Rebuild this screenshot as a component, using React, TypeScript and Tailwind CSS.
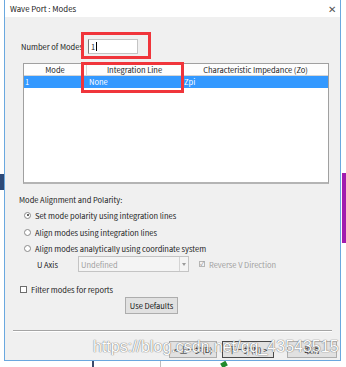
import React from "react";

const F = "font-['Noto_Sans_CJK_SC','Noto_Sans',sans-serif]";

function Radio({ checked }: { checked?: boolean }) {
  return (
    <span className="relative inline-block w-[7px] h-[7px] rounded-full border border-[#8a8a8a] bg-white shrink-0">
      {checked && <span className="absolute left-[1.5px] top-[1.5px] w-[2px] h-[2px] rounded-full bg-[#333]" />}
    </span>
  );
}

function Btn({ children, w, focus }: { children: React.ReactNode; w: string; focus?: boolean }) {
  return (
    <div
      className={`${w} h-[17px] flex items-center justify-center bg-[#e1e1e1] border ${
        focus ? "border-[#4a4a4a]" : "border-[#adadad]"
      } text-[7.5px] text-[#111]`}
    >
      {children}
    </div>
  );
}

export default function App() {
  return (
    <div className={`relative w-[346px] h-[367px] bg-white overflow-hidden ${F}`}>
      {/* background decorations */}
      <div className="absolute left-0 top-[174px] w-[4px] h-[16px] bg-[#2e4a78]" />
      <div className="absolute left-[342px] top-[173px] w-[4px] h-[70px] bg-[#a21caf]" />
      <div className="absolute left-[92px] top-[361px] w-[2px] h-[6px] bg-[#3b4a6b]" />
      <div className="absolute left-[160px] top-[361px] w-[1px] h-[6px] bg-[#bdbdbd]" />
      <div className="absolute left-[221px] top-[362px] w-[6px] h-[5px] bg-[#1f8a2c] rotate-[-30deg]" />

      {/* dialog */}
      <div className="absolute left-[4px] top-0 w-[337px] h-[361px] border-l border-r border-b border-[#6aa8df] bg-[#f0f0f0] flex flex-col">
        <div className="h-[17px] bg-white flex items-center justify-between pl-[5px] pr-[4px]">
          <span className="text-[7.8px] text-[#222]">Wave Port : Modes</span>
          <span className="text-[10px] text-[#555] leading-none">✕</span>
        </div>

        <div className="flex flex-col pl-[16px] pr-[11px] text-[7.5px] text-[#1a1a1a]">
          {/* number of modes */}
          <div className="flex items-center mt-[22px] h-[15px]">
            <span className="w-[67px] overflow-hidden whitespace-nowrap">Number of Modes</span>
            <div className="w-[50px] h-[15px] bg-white border border-[#c4c4c4] border-l-[#7a7a7a] flex items-center pl-[2px]">
              1<span className="w-[1px] h-[9px] bg-black ml-[1px]" />
            </div>
          </div>

          {/* table */}
          <div className="mt-[9px] ml-[2px] w-[306px] h-[121px] bg-white border border-[#a0a0a0] border-b-2 border-b-[#b4b4b4] flex flex-col">
            <div className="h-[12px] flex border-b border-[#d5d5d5] bg-[#fdfdfd] leading-[11px]">
              <div className="w-[63px] text-center border-r border-[#d5d5d5]">Mode</div>
              <div className="w-[96px] text-center border-r border-[#9a9a9a]">Integration Line</div>
              <div className="flex-1 text-center">Characteristic Impedance (Zo)</div>
            </div>
            <div className="h-[12px] flex bg-[#3399ff] text-white leading-[12px]">
              <div className="w-[63px] pl-[1px]">1</div>
              <div className="w-[96px] pl-[2px]">None</div>
              <div className="flex-1 pl-[1px]">Zpi</div>
            </div>
          </div>

          {/* alignment */}
          <div className="mt-[10px] -ml-[2px]">Mode Alignment and Polarity:</div>
          <div className="flex items-center gap-[4px] mt-[5px] ml-[3px] h-[10px]">
            <Radio checked />
            <span>Set mode polarity using integration lines</span>
          </div>
          <div className="flex items-center gap-[4px] mt-[7px] ml-[3px] h-[10px]">
            <Radio />
            <span>Align modes using integration lines</span>
          </div>
          <div className="flex items-center gap-[4px] mt-[6px] ml-[3px] h-[10px]">
            <Radio />
            <span>Align modes analytically using coordinate system</span>
          </div>
          <div className="flex items-center mt-[3px] h-[16px]">
            <span className="w-[57px] pl-[16px]">U Axis</span>
            <div className="w-[111px] h-[16px] border border-[#c4c4c4] bg-[#f4f4f4] flex items-center justify-between text-[#a0a0a0]">
              <span className="pl-[2px]">Undefined</span>
              <div className="w-[9px] h-full border-l border-[#d4d4d4] flex items-center justify-center">
                <span className="w-0 h-0 border-l-[2.5px] border-r-[2.5px] border-t-[3px] border-l-transparent border-r-transparent border-t-[#9a9a9a]" />
              </div>
            </div>
            <div className="ml-[10px] flex items-center gap-[4px] text-[#a0a0a0]">
              <span className="w-[6px] h-[6px] border border-[#b5b5b5] bg-[#f4f4f4] flex items-center justify-center text-[6px] leading-none text-[#888]">✓</span>
              <span>Reverse V Direction</span>
            </div>
          </div>

          {/* filter */}
          <div className="flex items-center mt-[12px] -ml-[1px] h-[10px]">
            <span className="w-[7px] h-[7px] border border-[#6d6d6d] bg-white shrink-0" />
            <span className="ml-[4px] w-[83px] overflow-hidden whitespace-nowrap">Filter modes for reports</span>
          </div>
          <div className="flex mt-[3px] ml-[104px]">
            <Btn w="w-[53px]">Use Defaults</Btn>
          </div>
        </div>

        <div className="mt-[16px] mx-[8px] border-t border-[#a5a5a5] border-b border-b-white" />

        <div className="flex justify-end gap-[5px] pr-[3px] mt-[9px]">
          <Btn w="w-[48px]">&lt; 上一步(B)</Btn>
          <Btn w="w-[52px]" focus>下一步(N) &gt;</Btn>
          <div className="w-[3px]" />
          <Btn w="w-[50px]">取消</Btn>
        </div>
      </div>

      {/* annotation red boxes */}
      <div className="absolute left-[81px] top-[32px] w-[70px] h-[27px] border-[3px] border-[#f0353b]" />
      <div className="absolute left-[81px] top-[62px] w-[103px] h-[31px] border-[3px] border-[#f0353b]" />

      {/* watermark */}
      <div className="absolute left-[93px] top-[337px] text-[16px] leading-[20px] text-white font-['Liberation_Sans',sans-serif] [text-shadow:0_0_1px_#666,0_0_1px_#666] whitespace-nowrap opacity-90">
        https://blog.csdn.net/qq_43543515
      </div>
    </div>
  );
}
